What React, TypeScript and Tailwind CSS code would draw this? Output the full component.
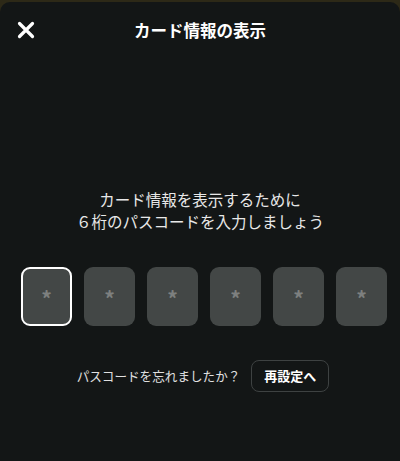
const font = { fontFamily: '"Noto Sans CJK JP", "Noto Sans", sans-serif' };

function CloseIcon() {
  return (
    <svg width="18" height="18" viewBox="0 0 18 18" fill="none">
      <path d="M2.5 2.5 L15.5 15.5 M15.5 2.5 L2.5 15.5" stroke="white" strokeWidth="3.2" strokeLinecap="round" />
    </svg>
  );
}

export default function App() {
  const digits = [0, 1, 2, 3, 4, 5];

  return (
    <div className="w-[400px] h-[461px] bg-[#2d2917] pt-[2px] overflow-hidden" style={font}>
      <div className="h-full bg-[#131616] rounded-t-[10px] flex flex-col">
        {/* Header */}
        <div className="relative h-[56px] flex items-center justify-center">
          <button className="absolute left-[17px] top-[19px] p-0" aria-label="close">
            <CloseIcon />
          </button>
          <h1 className="text-white text-[16.5px] font-bold">カード情報の表示</h1>
        </div>

        {/* Message */}
        <div className="mt-[130px] text-center text-[#e8e8e8] text-[15.5px] leading-[22px]">
          <p>カード情報を表示するために</p>
          <p>６桁のパスコードを入力しましょう</p>
        </div>

        {/* Passcode boxes */}
        <div className="mt-[35px] flex gap-[12px] pl-[21px]">
          {digits.map((i) => (
            <div
              key={i}
              className={`w-[51px] h-[59px] rounded-[9px] bg-[#434746] flex items-center justify-center ${
                i === 0 ? 'border-2 border-white' : ''
              }`}
            >
              <span className="text-[#7d807f] text-[21px] font-bold leading-none translate-y-[2px]">*</span>
            </div>
          ))}
        </div>

        {/* Forgot */}
        <div className="mt-[34px] flex items-center justify-center gap-[11px] pl-[6px]">
          <span className="text-[#e0e0e0] text-[12.6px]">パスコードを忘れましたか？</span>
          <button className="h-[32px] px-[12px] rounded-[8px] border border-[#3e4242] text-white text-[13px] font-bold">
            再設定へ
          </button>
        </div>
      </div>
    </div>
  );
}
